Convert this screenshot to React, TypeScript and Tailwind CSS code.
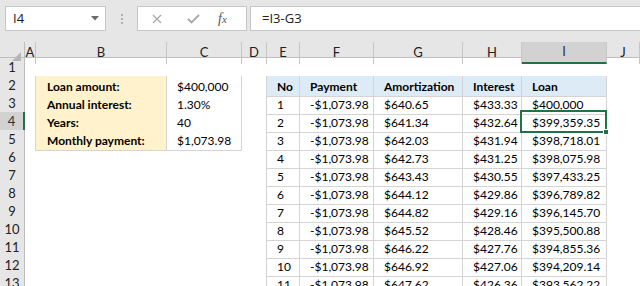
import React from 'react';

const LETTERS = ['A', 'B', 'C', 'D', 'E', 'F', 'G', 'H', 'I', 'J'];

// loan inputs in B2:C5
const inputs = [
  ['Loan amount:', '$400,000'],
  ['Annual interest:', '1.30%'],
  ['Years:', '40'],
  ['Monthly payment:', '$1,073.98'],
];

const headers = ['No', 'Payment', 'Amortization', 'Interest', 'Loan'];

// amortization schedule starting in E3
const schedule = [
  ['1', '-$1,073.98', '$640.65', '$433.33', '$400,000'],
  ['2', '-$1,073.98', '$641.34', '$432.64', '$399,359.35'],
  ['3', '-$1,073.98', '$642.03', '$431.94', '$398,718.01'],
  ['4', '-$1,073.98', '$642.73', '$431.25', '$398,075.98'],
  ['5', '-$1,073.98', '$643.43', '$430.55', '$397,433.25'],
  ['6', '-$1,073.98', '$644.12', '$429.86', '$396,789.82'],
  ['7', '-$1,073.98', '$644.82', '$429.16', '$396,145.70'],
  ['8', '-$1,073.98', '$645.52', '$428.46', '$395,500.88'],
  ['9', '-$1,073.98', '$646.22', '$427.76', '$394,855.36'],
  ['10', '-$1,073.98', '$646.92', '$427.06', '$394,209.14'],
  ['11', '-$1,073.98', '$647.62', '$426.36', '$393,562.22'],
];

const GRID = 'grid grid-cols-[25px_11px_131px_75px_25px_33px_74px_89px_59px_85px_1fr]';
const CELL = 'flex items-center pl-[10px] pt-[2px] whitespace-nowrap overflow-visible';

const FormulaBar = () => (
  <div className="h-[42px] flex items-start pt-[6px] bg-[#e6e6e6]">
    {/* Name box */}
    <div className="ml-[5px] w-[101px] h-[25px] bg-white border border-[#c6c6c6] flex items-center justify-between pl-[7px] pr-[6px]">
      <span className="text-[13px] text-[#222] font-['Open_Sans',sans-serif]">I4</span>
      <svg width="8" height="5" viewBox="0 0 8 5">
        <polygon points="0,0 8,0 4,4.5" fill="#6b6b6b" />
      </svg>
    </div>
    <div className="w-[31px] h-[25px] flex flex-col items-center justify-center gap-[2px]">
      <span className="w-[2px] h-[2px] bg-[#b0b0b0]" />
      <span className="w-[2px] h-[2px] bg-[#b0b0b0]" />
      <span className="w-[2px] h-[2px] bg-[#b0b0b0]" />
    </div>
    {/* cancel / enter / function */}
    <div className="w-[110px] h-[25px] bg-white border border-[#c6c6c6] flex items-center">
      <svg className="ml-[14px]" width="10" height="10" viewBox="0 0 10 10">
        <path d="M1 1 L9 9 M9 1 L1 9" stroke="#a8a8a8" strokeWidth="1.3" />
      </svg>
      <svg className="ml-[25px]" width="13" height="10" viewBox="0 0 13 10">
        <path d="M1 5 L4.5 8.5 L12 1" stroke="#a8a8a8" strokeWidth="1.8" fill="none" />
      </svg>
      <span className="ml-[18px] text-[14px] italic text-[#555] font-['Liberation_Serif',serif] leading-none">
        f<span className="text-[11px]">x</span>
      </span>
    </div>
    <div className="ml-[3px] flex-1 h-[25px] bg-white border border-r-0 border-[#c6c6c6] flex items-center pl-[11px]">
      <span className="text-[13px] text-[#222] font-['Open_Sans',sans-serif]">=I3-G3</span>
    </div>
  </div>
);

const ColumnHeaders = () => (
  <div className={`${GRID} h-[16px] bg-[#e6e6e6] border-b border-[#bdbdbd]`}>
    <div className="relative border-r border-[#bdbdbd]">
      <svg className="absolute right-[3px] bottom-[3px]" width="9" height="9" viewBox="0 0 9 9">
        <polygon points="9,0 9,9 0,9" fill="#b5b5b5" />
      </svg>
    </div>
    {LETTERS.map((l) => (
      <div
        key={l}
        className={
          l === 'I'
            ? 'flex items-center justify-center bg-[#d2d2d2] border-r border-[#c6c6c6] border-b-2 border-b-[#217346] text-[13px] text-[#333]'
            : 'flex items-center justify-center border-r border-[#c6c6c6] text-[13px] text-[#222]'
        }
      >
        {l}
      </div>
    ))}
  </div>
);

const Row = ({ r }: { r: number }) => {
  const inLeft = r >= 2 && r <= 5;
  const inRight = r >= 2;
  const input = inputs[r - 2];
  const data = r >= 3 ? schedule[r - 3] : null;

  return (
    <div className={`${GRID} h-[18px]`}>
      <div
        className={
          r === 4
            ? 'flex items-center justify-center bg-[#d2d2d2] border-b border-[#c6c6c6] border-r-2 border-r-[#217346] text-[13px] text-[#333]'
            : 'flex items-center justify-center bg-[#e6e6e6] border-b border-[#c6c6c6] border-r border-r-[#bdbdbd] text-[13px] text-[#222]'
        }
      >
        {r}
      </div>
      {/* A */}
      <div className={inLeft ? 'border-r border-[#d4d4d4]' : ''} />
      {/* B, C */}
      {inLeft ? (
        <>
          <div className={`${CELL} pl-[11px] bg-[#fff2cc] font-bold border-r border-b border-[#d4d4d4]`}>{input[0]}</div>
          <div className={`${CELL} bg-white border-r border-b border-[#d4d4d4]`}>{input[1]}</div>
        </>
      ) : r === 1 ? (
        <>
          <div className="border-b border-[#d4d4d4]" />
          <div className="border-b border-[#d4d4d4]" />
        </>
      ) : (
        <>
          <div />
          <div />
        </>
      )}
      {/* D */}
      <div className={inRight ? 'border-r border-[#d4d4d4]' : ''} />
      {/* E..I */}
      {r === 1 &&
        headers.map((h) => <div key={h} className="border-b border-[#d4d4d4]" />)}
      {r === 2 &&
        headers.map((h) => (
          <div key={h} className={`${CELL} bg-[#ddebf7] font-bold border-r border-b border-[#d4d4d4]`}>
            {h}
          </div>
        ))}
      {data &&
        data.map((v, i) => (
          <div key={i} className={`${CELL} relative border-r border-b border-[#d4d4d4]`}>
            {v}
            {r === 4 && i === 4 && (
              <>
                <div className="absolute -left-[2px] -top-[2px] -right-[1px] -bottom-[1px] border-2 border-[#217346] z-10" />
                <div className="absolute -right-[3px] -bottom-[3px] w-[6px] h-[6px] bg-[#217346] border border-white z-20" />
              </>
            )}
          </div>
        ))}
      <div />
    </div>
  );
};

export default function App() {
  const rows = Array.from({ length: 13 }, (_, i) => i + 1);
  return (
    <div className="w-[640px] h-[286px] overflow-hidden bg-white text-black font-['Lato',sans-serif] text-[12px]">
      <FormulaBar />
      <ColumnHeaders />
      {rows.map((r) => (
        <Row key={r} r={r} />
      ))}
    </div>
  );
}
